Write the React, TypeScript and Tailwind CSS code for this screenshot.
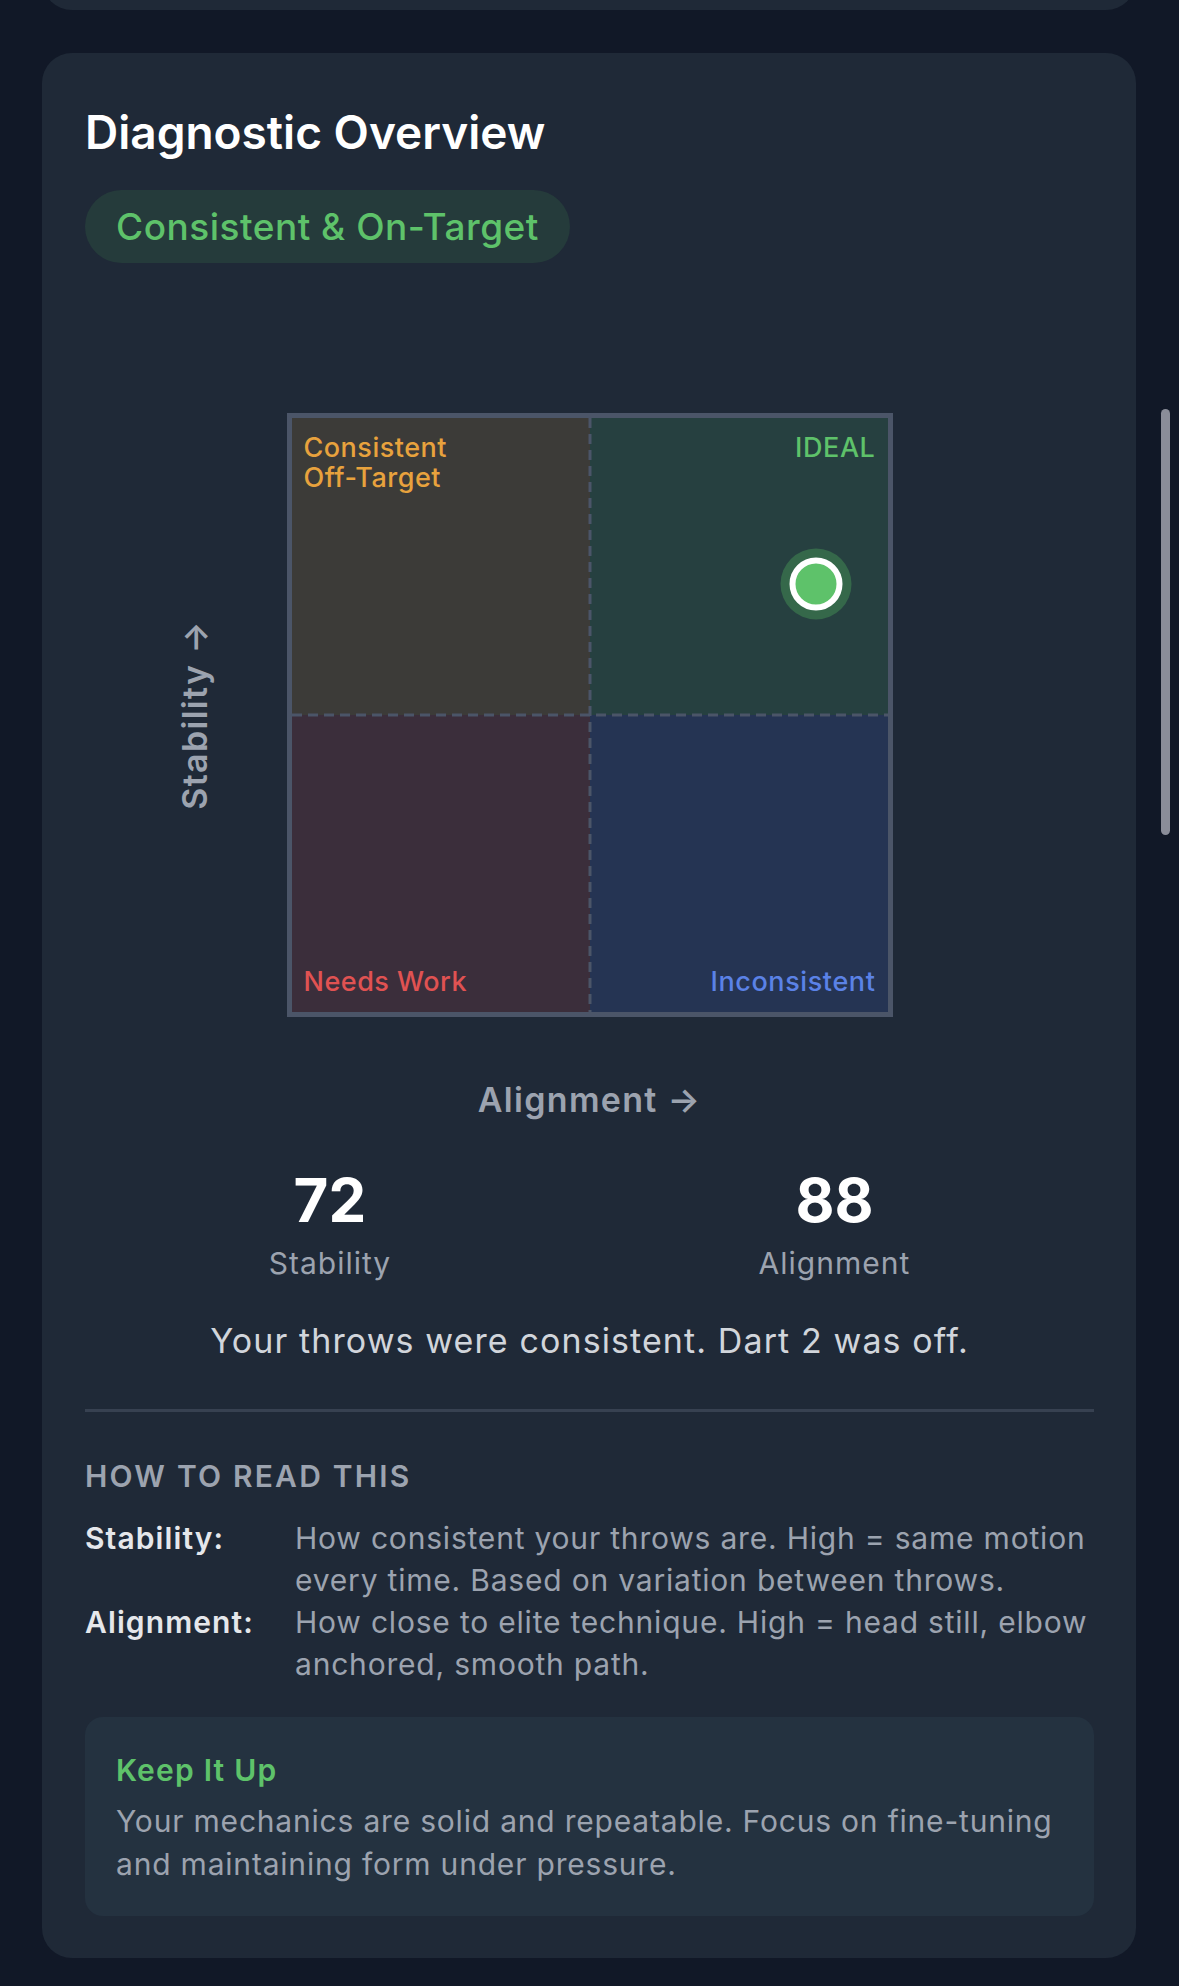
import React from "react";

function Quadrant({
  bg,
  children,
  align,
}: {
  bg: string;
  children: React.ReactNode;
  align: string;
}) {
  return <div className={`${bg} flex flex-col ${align} px-[12px] py-[15px]`}>{children}</div>;
}

export default function App() {
  return (
    <div className="relative min-h-[1986px] bg-[#111827] font-['Inter','Noto_Sans',sans-serif] overflow-hidden">
      <div className="pl-[42px] pr-[43px]">
        <div className="-mt-[70px] h-[80px] rounded-[30px] bg-[#1f2937]" />
        <div className="mt-[43px] rounded-[30px] bg-[#1f2937] pl-[43px] pr-[42px] pt-[51px] pb-[42px]">
          <h2 className="text-[46px] leading-[56px] font-semibold text-white">Diagnostic Overview</h2>
          <div className="mt-[30px]">
            <span className="inline-flex h-[73px] items-center rounded-full bg-[#253b3b] px-[31px] text-[37px] tracking-[0.5px] font-medium text-[#5ec26a]">
              Consistent &amp; On-Target
            </span>
          </div>

          <div className="mt-[150px] grid grid-cols-[1fr_auto_1fr]">
            <div className="flex items-center justify-end pr-[74px]">
              <span className="[writing-mode:vertical-rl] rotate-180 text-[34px] leading-[36px] tracking-[1.3px] font-semibold text-[#9ca3af]">
                Stability →
              </span>
            </div>
            <div className="relative h-[604px] w-[606px] border-[5px] border-[#4b5568]">
              <div className="grid h-full w-full grid-cols-2 grid-rows-2">
                <Quadrant bg="bg-[#3c3b38]" align="items-start justify-start">
                  <span className="text-[27px] leading-[30px] tracking-[0.5px] font-medium text-[#e8a23d]">
                    Consistent
                    <br />
                    Off-Target
                  </span>
                </Quadrant>
                <Quadrant bg="bg-[#264040]" align="items-end justify-start">
                  <span className="text-[27px] leading-[30px] font-medium tracking-[0.6px] text-[#5ec26a]">IDEAL</span>
                </Quadrant>
                <Quadrant bg="bg-[#3b2e3b]" align="items-start justify-end">
                  <span className="text-[27px] leading-[30px] tracking-[0.5px] font-medium text-[#e05252]">Needs Work</span>
                </Quadrant>
                <Quadrant bg="bg-[#253453]" align="items-end justify-end">
                  <span className="text-[27px] leading-[30px] tracking-[0.6px] font-medium text-[#5b82e6]">Inconsistent</span>
                </Quadrant>
              </div>
              <svg className="pointer-events-none absolute inset-0 h-full w-full">
                <line x1="50%" y1="0" x2="50%" y2="100%" stroke="#4b5568" strokeWidth="3" strokeDasharray="10 6" />
                <line x1="0" y1="50%" x2="100%" y2="50%" stroke="#4b5568" strokeWidth="3" strokeDasharray="10 6" />
              </svg>
              <div className="absolute left-[88%] top-[28%] flex h-[71px] w-[71px] -translate-x-1/2 -translate-y-1/2 items-center justify-center rounded-full bg-[#35684a]">
                <div className="h-[53px] w-[53px] rounded-full border-[6px] border-white bg-[#5ec26a]" />
              </div>
            </div>
            <div />
          </div>

          <div className="mt-[63px] text-center text-[34px] leading-[40px] tracking-[1.3px] font-semibold text-[#9ca3af]">
            Alignment →
          </div>

          <div className="mt-[50px] flex justify-around">
            <div className="flex flex-col items-center">
              <div className="text-[60px] leading-[60px] font-bold text-white">72</div>
              <div className="mt-[15px] text-[30px] leading-[36px] tracking-[1px] text-[#9ca3af]">Stability</div>
            </div>
            <div className="flex flex-col items-center">
              <div className="text-[60px] leading-[60px] font-bold text-white">88</div>
              <div className="mt-[15px] text-[30px] leading-[36px] tracking-[1px] text-[#9ca3af]">Alignment</div>
            </div>
          </div>

          <p className="mt-[38px] text-center text-[34px] leading-[44px] tracking-[1.1px] text-[#d1d5db]">
            Your throws were consistent. Dart 2 was off.
          </p>

          <div className="mt-[46px] h-[3px] bg-[#374151]" />

          <div className="mt-[45px] text-[30px] leading-[38px] font-semibold uppercase tracking-[2.2px] text-[#9ca3af]">
            How to read this
          </div>

          <div className="mt-[22px] grid grid-cols-[210px_1fr] text-[30px] leading-[42px]">
            <div className="font-semibold tracking-[1.1px] text-[#e5e7eb]">Stability:</div>
            <div className="tracking-[0.8px] text-[#9ca3af]">
              How consistent your throws are. High = same motion every time. Based on variation between throws.
            </div>
            <div className="font-semibold tracking-[1.1px] text-[#e5e7eb]">Alignment:</div>
            <div className="tracking-[0.8px] text-[#9ca3af]">
              How close to elite technique. High = head still, elbow anchored, smooth path.
            </div>
          </div>

          <div className="mt-[32px] rounded-[18px] bg-[#243240] px-[31px] pt-[34px] pb-[30px]">
            <div className="text-[30px] leading-[38px] font-semibold tracking-[1.2px] text-[#5ec26a]">Keep It Up</div>
            <p className="mt-[11px] text-[30px] leading-[43px] tracking-[0.8px] text-[#9ca3af]">
              Your mechanics are solid and repeatable. Focus on fine-tuning and maintaining form under pressure.
            </p>
          </div>
        </div>
      </div>
      <div className="absolute left-[1161px] top-[409px] h-[426px] w-[9px] rounded-full bg-[#8a8d99]" />
    </div>
  );
}
